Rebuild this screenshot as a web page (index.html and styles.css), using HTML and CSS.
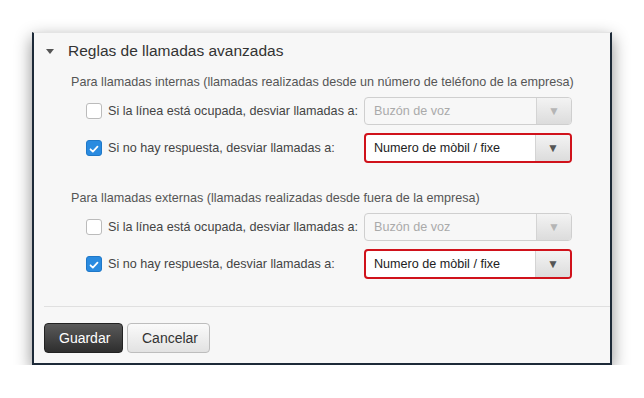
FILE: index.html
```html
<!DOCTYPE html>
<html lang="es">
<head>
  <meta charset="UTF-8" />
  <meta name="viewport" content="width=device-width, initial-scale=1.0"/>
  <title>Reglas de llamadas avanzadas</title>
  <link rel="stylesheet" href="styles.css">
</head>
<body>
  <div class="panel">
    <div class="cabecera">
      <span class="triangulo"></span>
      <h2>Reglas de llamadas avanzadas</h2>
    </div>

    <div class="seccion">
      <p class="titulo-seccion">Para llamadas internas (llamadas realizadas desde un número de teléfono de la empresa)</p>
      <div class="fila">
        <span class="casilla"></span>
        <span class="etiqueta">Si la línea está ocupada, desviar llamadas a:</span>
        <div class="selector deshabilitado"><span class="valor">Buzón de voz</span><span class="flecha">&#9660;</span></div>
      </div>
      <div class="fila">
        <span class="casilla marcada"><svg viewBox="0 0 16 16" width="16" height="16"><path d="M4 8.3l2.7 2.7L12 5.4" fill="none" stroke="#fff" stroke-width="2" stroke-linecap="round" stroke-linejoin="round"/></svg></span>
        <span class="etiqueta">Si no hay respuesta, desviar llamadas a:</span>
        <div class="selector activo"><span class="valor">Numero de mòbil / fixe</span><span class="flecha">&#9660;</span></div>
      </div>
    </div>

    <div class="seccion">
      <p class="titulo-seccion">Para llamadas externas (llamadas realizadas desde fuera de la empresa)</p>
      <div class="fila">
        <span class="casilla"></span>
        <span class="etiqueta">Si la línea está ocupada, desviar llamadas a:</span>
        <div class="selector deshabilitado"><span class="valor">Buzón de voz</span><span class="flecha">&#9660;</span></div>
      </div>
      <div class="fila">
        <span class="casilla marcada"><svg viewBox="0 0 16 16" width="16" height="16"><path d="M4 8.3l2.7 2.7L12 5.4" fill="none" stroke="#fff" stroke-width="2" stroke-linecap="round" stroke-linejoin="round"/></svg></span>
        <span class="etiqueta">Si no hay respuesta, desviar llamadas a:</span>
        <div class="selector activo"><span class="valor">Numero de mòbil / fixe</span><span class="flecha">&#9660;</span></div>
      </div>
    </div>

    <div class="pie">
      <button class="btn-guardar">Guardar</button>
      <button class="btn-cancelar">Cancelar</button>
    </div>
  </div>
</body>
</html>
```

FILE: styles.css
```css
body { margin: 0; background: #fff; font-family: "Liberation Sans", Arial, sans-serif; color: #333; }
.panel { box-sizing: border-box; width: 580px; margin: 32px 0 0 32px; padding: 8px 0 10px; background: #f7f7f7; border: 2px solid #1d2a38; border-top: 1px solid #e4e4e4; box-shadow: 0 6px 16px rgba(0,0,0,0.45); }
.cabecera { display: flex; align-items: center; height: 20px; padding-left: 12px; }
.triangulo { width: 0; height: 0; border-left: 4px solid transparent; border-right: 4px solid transparent; border-top: 5px solid #555; margin-right: 14px; }
.cabecera h2 { margin: 0; font-size: 15.5px; font-weight: normal; color: #333; line-height: 20px; }
.seccion { padding-left: 37px; margin-top: 13px; }
.seccion + .seccion { margin-top: 27px; }
.titulo-seccion { margin: 0 0 6px; font-size: 12.6px; line-height: 16px; color: #555; white-space: nowrap; }
.fila { display: flex; align-items: center; height: 30px; padding: 0 38px 0 15px; margin-bottom: 7px; font-size: 12.6px; }
.fila:last-child { margin-bottom: 0; }
.casilla { box-sizing: border-box; width: 16px; height: 16px; border: 1px solid #bbb; border-radius: 3px; background: #fff; margin-right: 6px; display: flex; }
.casilla.marcada { background: #2a8be0; border-color: #1f78c8; }
.etiqueta { flex: 1; color: #444; }
.selector { box-sizing: border-box; width: 208px; display: flex; border-radius: 4px; overflow: hidden; font-size: 12.6px; }
.selector .valor { flex: 1; padding-left: 9px; display: flex; align-items: center; }
.selector .flecha { width: 34px; display: flex; align-items: center; justify-content: center; font-size: 12px; border-left: 1px solid #d4d4d4; background: linear-gradient(#f3f3f3, #dcdcdc); }
.deshabilitado { height: 28px; border: 1px solid #cfcfcf; background: #f7f7f7; color: #aaa; }
.deshabilitado .flecha { color: #b5b5b5; }
.activo { height: 30px; border: 2px solid #d0121b; background: #fff; color: #222; }
.activo .valor { padding-left: 8px; }
.activo .flecha { color: #555; }
.pie { margin: 27px 0 0 10px; padding-top: 16px; border-top: 1px solid #e0e0e0; display: flex; gap: 4px; }
.pie button { height: 30px; padding: 0 14px; font-family: "Liberation Sans", Arial, sans-serif; font-size: 14px; border-radius: 4px; cursor: pointer; }
.btn-guardar { width: 79px; color: #fff; border: 1px solid #222; background: linear-gradient(#5a5a5a, #2e2e2e); }
.btn-cancelar { width: 83px; color: #333; border: 1px solid #bdbdbd; background: linear-gradient(#fafafa, #e2e2e2); }
```
